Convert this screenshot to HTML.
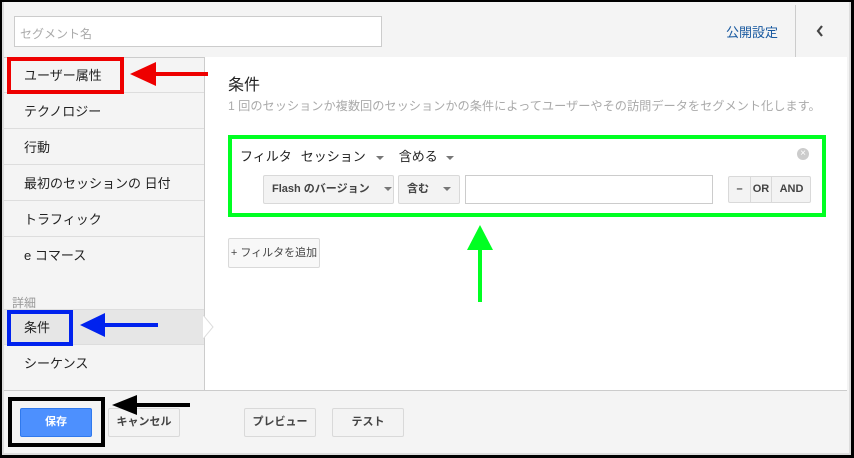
<!DOCTYPE html><html><head><meta charset="utf-8"><style>
*{margin:0;padding:0;box-sizing:border-box}
body{width:854px;height:458px;background:#fff;font-family:"Liberation Sans","Noto Sans CJK JP",sans-serif;position:relative;overflow:hidden}
.a{position:absolute}
.frame{left:0;top:0;width:854px;height:458px;border:2px solid #000;border-right-width:3px;border-bottom-width:3px}
.item{position:absolute;left:4px;width:200px;height:36px;border-bottom:1px solid #ddd;font-size:13px;color:#222;padding-left:20px;line-height:37px}
.btn{position:absolute;border:1px solid #d9d9d9;background:#f3f3f3;border-radius:2px;font-size:11px;font-weight:bold;color:#444;text-align:center}
.tri{display:inline-block;width:0;height:0;border-left:4px solid transparent;border-right:4px solid transparent;border-top:4px solid #777;vertical-align:middle;margin-left:8px}
</style></head><body>
<div class="a" style="left:2px;top:2px;width:849px;height:453px;border-left:2px solid #ddd;border-right:2px solid #ddd;border-bottom:2px solid #ddd;background:#f4f4f4"></div>
<div class="a" style="left:4px;top:57px;width:843px;height:1px;background:#ccc"></div>
<div class="a" style="left:14px;top:16px;width:368px;height:31px;background:#fff;border:1px solid #ccc;font-size:12px;color:#aaa;padding:8px 5px">セグメント名</div>
<div class="a" style="left:726px;top:22px;font-size:13px;color:#1a5aa0">公開設定</div>
<div class="a" style="left:795px;top:5px;width:1px;height:52px;background:#ccc"></div>
<svg class="a" style="left:815px;top:24px" width="10" height="14"><path d="M7 2 L3 7 L7 12" stroke="#444" stroke-width="2.2" fill="none"/></svg>
<div class="a" style="left:204px;top:57px;width:643px;height:333px;background:#fff;border-left:1px solid #ccc"></div>
<div class="a" style="left:4px;top:390px;width:843px;height:1px;background:#ccc"></div>
<div class="item" style="top:57px">ユーザー属性</div>
<div class="item" style="top:93px">テクノロジー</div>
<div class="item" style="top:129px">行動</div>
<div class="item" style="top:165px">最初のセッションの 日付</div>
<div class="item" style="top:201px">トラフィック</div>
<div class="item" style="top:237px;border-bottom:none">e コマース</div>
<div class="a" style="left:12px;top:294px;font-size:12px;color:#999">詳細</div>
<div class="item" style="top:309px;background:#e6e6e6;border-top:1px solid #ddd;line-height:35px">条件</div>
<svg class="a" style="left:203px;top:315px" width="12" height="24"><path d="M0 0 L10 12 L0 24" fill="#fff" stroke="#ddd"/></svg>
<div class="item" style="top:345px;border-bottom:none">シーケンス</div>
<div class="a" style="left:228px;top:71px;font-size:16px;color:#222">条件</div>
<div class="a" style="left:228px;top:96px;font-size:12.2px;color:#aaa;white-space:nowrap">1 回のセッションか複数回のセッションかの条件によってユーザーやその訪問データをセグメント化します。</div>
<div class="a" style="left:228px;top:135px;width:598px;height:82px;border:4px solid #00ff22"></div>
<div class="a" style="left:240px;top:146px;font-size:13px;color:#222;white-space:nowrap">フィルタ<span style="margin-left:9px">セッション</span><span class="tri" style="margin-left:10px"></span><span style="margin-left:15px">含める</span><span class="tri"></span></div>
<div class="a" style="left:797px;top:148px;width:12px;height:12px;border-radius:50%;background:#ccc;color:#fff;font-size:10px;line-height:12px;text-align:center">×</div>
<div class="btn" style="left:263px;top:175px;width:131px;height:29px;line-height:27px;text-align:left;padding-left:8px">Flash のバージョン<span class="tri" style="margin-left:14px"></span></div>
<div class="btn" style="left:398px;top:175px;width:62px;height:29px;line-height:27px;text-align:left;padding-left:8px">含む<span class="tri" style="margin-left:14px"></span></div>
<div class="a" style="left:465px;top:175px;width:248px;height:29px;border:1px solid #ccc;background:#fff"></div>
<div class="btn" style="left:728px;top:176px;width:83px;height:27px;line-height:25px"><span style="position:absolute;left:0;width:21px">–</span><span style="position:absolute;left:21px;width:21px;border-left:1px solid #d9d9d9;height:25px">OR</span><span style="position:absolute;left:42px;width:40px;border-left:1px solid #d9d9d9;height:25px">AND</span></div>
<div class="btn" style="left:228px;top:238px;width:92px;height:30px;line-height:28px;font-weight:normal;font-size:11px;background:#f8f8f8">+ フィルタを追加</div>
<div class="btn" style="left:20px;top:408px;width:72px;height:29px;line-height:27px;background:#4d90fe;border-color:#3079ed;color:#fff">保存</div>
<div class="btn" style="left:108px;top:408px;width:72px;height:29px;line-height:27px">キャンセル</div>
<div class="btn" style="left:244px;top:408px;width:72px;height:29px;line-height:27px">プレビュー</div>
<div class="btn" style="left:332px;top:408px;width:72px;height:29px;line-height:27px">テスト</div>
<div class="a" style="left:7px;top:57px;width:117px;height:37px;border:4px solid #e00"></div>
<div class="a" style="left:7px;top:310px;width:66px;height:36px;border:4px solid #0022ee"></div>
<div class="a" style="left:8px;top:397px;width:97px;height:50px;border:4px solid #000"></div>
<svg class="a" style="left:0;top:0" width="854" height="458">
<path d="M155 74 H208" stroke="#e00" stroke-width="4"/><path d="M130 74 L156 62 L156 86Z" fill="#e00"/>
<path d="M105 325 H158" stroke="#0022ee" stroke-width="4"/><path d="M80 325 L105 313 L105 337Z" fill="#0022ee"/>
<path d="M135 405 H190" stroke="#000" stroke-width="4"/><path d="M112 405 L137 395 L137 415Z" fill="#000"/>
<path d="M480 248 V302" stroke="#00ff22" stroke-width="4"/><path d="M480 225 L467 250 L493 250Z" fill="#00ff22"/>
</svg>
<div class="a frame"></div>
</body></html>
